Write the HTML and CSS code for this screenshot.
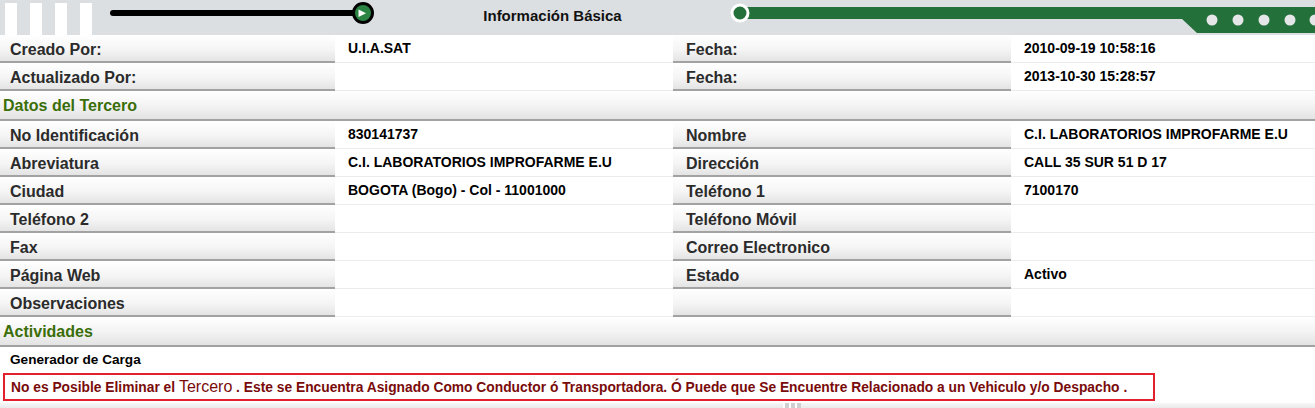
FILE: index.html
```html
<!DOCTYPE html>
<html lang="es">
<head>
<meta charset="utf-8">
<title>Información Básica</title>
<link rel="stylesheet" href="styles.css">
</head>
<body>
<div class="page">
  <header class="topbar">
    <svg class="stripes" width="105" height="35" viewBox="0 0 105 35">
      <rect x="5" y="3" width="12" height="32" fill="#fff"/>
      <rect x="30" y="3" width="12" height="32" fill="#fff"/>
      <rect x="55" y="3" width="12" height="32" fill="#fff"/>
      <rect x="80" y="3" width="12" height="32" fill="#fff"/>
    </svg>
    <svg class="slider" width="275" height="35" viewBox="0 0 275 35">
      <line x1="8" y1="13" x2="250" y2="13" stroke="#000" stroke-width="6" stroke-linecap="round"/>
      <circle cx="258" cy="13" r="9.5" fill="#2a8443" stroke="#000" stroke-width="3"/>
      <polygon points="253.5,9.5 253.5,17 261,13.3" fill="#fff"/>
    </svg>
    <div class="title">Información Básica</div>
    <svg class="track" width="590" height="35" viewBox="0 0 590 35">
      <polygon points="20,7 590,7 590,33 472,33 457,19 20,19" fill="#24703a"/>
      <circle cx="15" cy="13" r="8" fill="#24703a" stroke="#fff" stroke-width="3"/>
      <circle cx="487" cy="20" r="5.5" fill="#e4e6e8"/>
      <circle cx="513" cy="20" r="5.5" fill="#e4e6e8"/>
      <circle cx="539" cy="20" r="5.5" fill="#e4e6e8"/>
      <circle cx="565" cy="20" r="5.5" fill="#e4e6e8"/>
      <circle cx="590" cy="20" r="5.5" fill="#e4e6e8"/>
    </svg>
  </header>

  <div class="grid">
    <div class="lbl first">Creado Por:</div><div class="val">U.I.A.SAT</div>
    <div class="lbl">Fecha:</div><div class="val">2010-09-19 10:58:16</div>

    <div class="lbl first">Actualizado Por:</div><div class="val"></div>
    <div class="lbl">Fecha:</div><div class="val">2013-10-30 15:28:57</div>

    <div class="section">Datos del Tercero</div>

    <div class="lbl first">No Identificación</div><div class="val">830141737</div>
    <div class="lbl">Nombre</div><div class="val">C.I. LABORATORIOS IMPROFARME E.U</div>

    <div class="lbl first">Abreviatura</div><div class="val">C.I. LABORATORIOS IMPROFARME E.U</div>
    <div class="lbl">Dirección</div><div class="val">CALL 35 SUR 51 D 17</div>

    <div class="lbl first">Ciudad</div><div class="val">BOGOTA (Bogo) - Col - 11001000</div>
    <div class="lbl">Teléfono 1</div><div class="val">7100170</div>

    <div class="lbl first">Teléfono 2</div><div class="val"></div>
    <div class="lbl">Teléfono Móvil</div><div class="val"></div>

    <div class="lbl first">Fax</div><div class="val"></div>
    <div class="lbl">Correo Electronico</div><div class="val"></div>

    <div class="lbl first">Página Web</div><div class="val"></div>
    <div class="lbl">Estado</div><div class="val">Activo</div>

    <div class="lbl first">Observaciones</div><div class="val"></div>
    <div class="lbl"></div><div class="val"></div>

    <div class="section">Actividades</div>

    <div class="activity">Generador de Carga</div>
  </div>

  <div class="error">No es Posible Eliminar el <span class="big">Tercero</span> . Este se Encuentra Asignado Como Conductor ó Transportadora. Ó Puede que Se Encuentre Relacionado a un Vehiculo y/o Despacho .</div>

  <div class="footer"><span class="grip"></span></div>
</div>
</body>
</html>
```

FILE: styles.css
```css
* { box-sizing: border-box; }

html, body {
  margin: 0;
  padding: 0;
  background: #fff;
}

body {
  font-family: "Liberation Sans", Arial, sans-serif;
  color: #000;
  width: 1315px;
  height: 408px;
  overflow: hidden;
}

.topbar {
  display: flex;
  align-items: flex-start;
  height: 35px;
  background: #dcdfe2;
}

.topbar svg { display: block; flex: none; }

.title {
  flex: 1;
  text-align: center;
  font-weight: bold;
  font-size: 15px;
  line-height: 16px;
  padding-top: 8px;
  color: #111;
}

.grid {
  display: grid;
  grid-template-columns: 335px 338px 338px 304px;
}

.lbl {
  height: 28px;
  padding: 5px 0 0 13px;
  font-weight: bold;
  font-size: 16px;
  line-height: 19px;
  color: #2b2b2b;
  background: linear-gradient(#ffffff 0%, #f5f5f5 55%, #e4e4e4 100%);
  border-bottom: 2px solid #a2a2a2;
  white-space: nowrap;
}

.lbl.first { padding-left: 10px; }

.val {
  height: 28px;
  padding: 5px 0 0 13px;
  font-weight: bold;
  font-size: 14px;
  line-height: 16px;
  color: #000;
  background: #fff;
  border-bottom: 1px solid #ececec;
  white-space: nowrap;
}

.section {
  grid-column: 1 / -1;
  height: 30px;
  padding: 5px 0 0 3px;
  font-weight: bold;
  font-size: 16px;
  line-height: 19px;
  color: #3b6e09;
  background: linear-gradient(#ffffff 0%, #f4f4f4 50%, #e3e3e3 100%);
  border-bottom: 2px solid #a2a2a2;
}

.activity {
  grid-column: 1 / -1;
  height: 26px;
  padding: 5px 0 0 10px;
  font-weight: bold;
  font-size: 13.6px;
  line-height: 16px;
  color: #000;
}

.error {
  margin-left: 3px;
  width: 1152px;
  height: 28px;
  border: 2px solid #e2202e;
  padding-left: 6px;
  font-weight: bold;
  font-size: 13.8px;
  line-height: 23px;
  color: #7a0b0b;
  white-space: nowrap;
  overflow: hidden;
}

.error .big {
  font-size: 16px;
  font-weight: normal;
}

.footer {
  margin-top: 2px;
  height: 8px;
  background: linear-gradient(#f6f6f6, #e2e2e2);
  padding-left: 783px;
}

.grip {
  display: block;
  width: 18px;
  height: 8px;
  background: repeating-linear-gradient(90deg, #ffffff 0 2px, #d0d0d0 2px 6px);
}
```
